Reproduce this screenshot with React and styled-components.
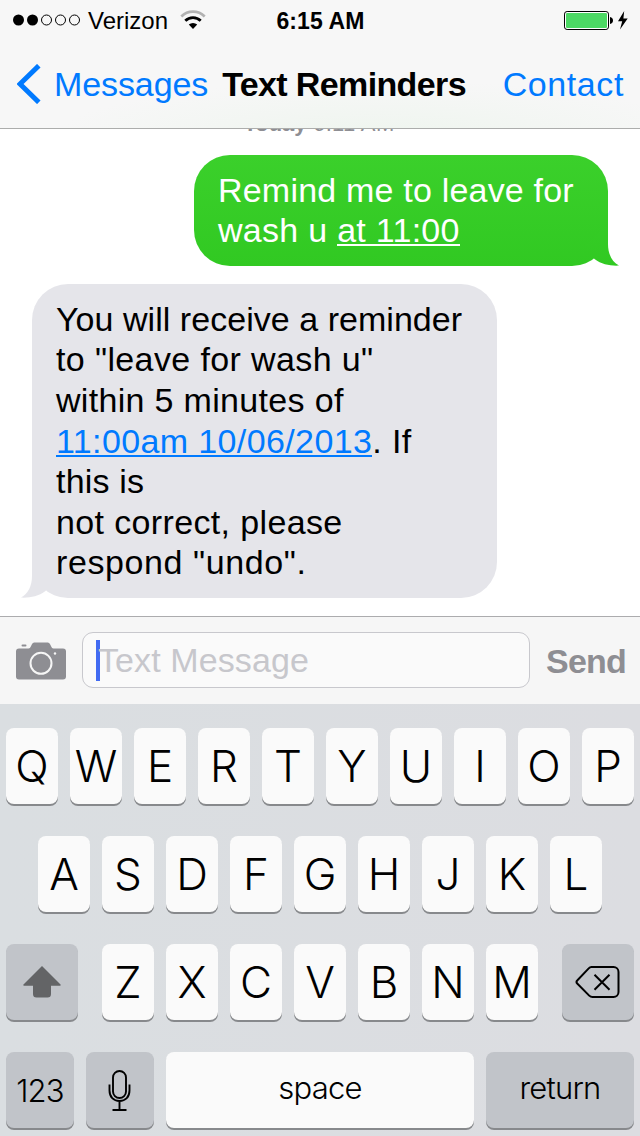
import React from 'react';
import styled, { createGlobalStyle, css } from 'styled-components';

const GlobalStyle = createGlobalStyle`
    * {
        box-sizing: border-box;
    }
    body {
        margin: 0;
        background-color: #fff;
        font-family: "Liberation Sans", Arial, sans-serif;
        overflow: hidden;
    }
`

const Phone = styled.div`
    display: flex;
    flex-direction: column;
    width: 640px;
    height: 1136px;
    overflow: hidden;
    background-color: #fff;
`

const Header = styled.header`
    flex: none;
    height: 129px;
    border-bottom: 1px solid #acadac;
    background: radial-gradient(ellipse 330px 60px at 380px 140px, #eef5ee, #f7f7f7);
`

const StatusBar = styled.div`
    display: grid;
    grid-template-columns: 1fr auto 1fr;
    align-items: center;
    height: 40px;
    padding: 0 12px 0 13px;
    font-size: 24px;
`

const Carrier = styled.div`
    display: flex;
    align-items: center;
    .name {
        margin-left: 7px;
        padding-top: 2px;
    }
    .wifi {
        margin-left: 12px;
    }
`

const Clock = styled.div`
    padding-top: 2px;
    font-weight: bold;
    font-size: 23px;
    letter-spacing: 0.1px;
`

const Power = styled.div`
    display: flex;
    justify-content: flex-end;
`

const NavBar = styled.nav`
    display: flex;
    align-items: center;
    height: 88px;
    padding: 0 16px 0 17px;
    font-size: 34px;
    line-height: 40px;
`

const NavLink = styled.a`
    display: flex;
    align-items: center;
    color: #007aff;
    letter-spacing: ${props => props.$spacing || '0'};
    svg {
        margin-right: 13px;
    }
`

const Title = styled.h1`
    flex: 1;
    margin: 0 0 0 14px;
    font-size: 34px;
    line-height: 40px;
    letter-spacing: -0.63px;
    white-space: nowrap;
`

const Messages = styled.main`
    display: flex;
    flex-direction: column;
    flex: 1;
    overflow: hidden;
`

const Timestamp = styled.div`
    flex: none;
    height: 26px;
    margin-top: -18px;
    margin-bottom: 18px;
    padding-right: 2px;
    text-align: center;
    font-size: 22px;
    line-height: 26px;
    letter-spacing: 0.35px;
    color: #8e8e93;
    b {
        letter-spacing: 0;
    }
`

const Bubble = styled.div`
    position: relative;
    flex: none;
    padding: 14.8px 24px 15px;
    border-radius: 36px;
    font-size: 34px;
    line-height: 40.6px;
    white-space: pre;
    u {
        text-decoration: none;
        background: linear-gradient(currentColor, currentColor) 0 calc(100% - 3px) / 100% 2px no-repeat;
    }
    svg {
        position: absolute;
        bottom: 0;
    }
    ${props => props.$sent ? css`
        align-self: flex-end;
        width: 414px;
        height: 111px;
        margin-right: 32px;
        color: #fff;
        background: linear-gradient(#3bd02b, #31c922);
        svg {
            right: -11px;
        }
    ` : css`
        align-self: flex-start;
        width: 465px;
        height: 314px;
        margin: 18px 0 0 32px;
        color: #000;
        background-color: #e5e5ea;
        svg {
            left: -11px;
            transform: scaleX(-1);
        }
        u {
            color: #007aff;
        }
    `}
`

const Line = styled.div`
    letter-spacing: ${props => props.$spacing || '0.2px'};
`

const Composer = styled.div`
    display: flex;
    align-items: flex-start;
    flex: none;
    height: 88px;
    padding: 15px 14px 0 16px;
    border-top: 1px solid #acacae;
    background-color: #f6f6f6;
    svg {
        flex: none;
        margin-top: 10px;
    }
`

const Field = styled.div`
    display: flex;
    align-items: center;
    flex: none;
    width: 448px;
    height: 56px;
    margin: 0 16px;
    padding-left: 13px;
    border: 1px solid #c8c8cd;
    border-radius: 11px;
    background-color: #fafafa;
    font-size: 34px;
    letter-spacing: 0.1px;
    color: #c7c7cc;
`

const Caret = styled.span`
    width: 4px;
    height: 41px;
    margin-right: -2px;
    background-color: #426bf2;
`

const Send = styled.div`
    font-size: 34px;
    line-height: 58px;
    font-weight: bold;
    letter-spacing: -0.8px;
    color: #8e8e93;
`

const Keyboard = styled.div`
    display: flex;
    flex-direction: column;
    gap: 32px;
    flex: none;
    height: 432px;
    padding: 24px 6px 0;
    background: linear-gradient(90deg, #dadee1, #dcdde1);
`

const KeyRow = styled.div`
    display: flex;
    justify-content: ${props => props.$spread ? 'space-between' : 'center'};
    gap: 12px;
`

const Letters = styled.div`
    display: flex;
    gap: 12px;
`

const Key = styled.div`
    display: flex;
    align-items: center;
    justify-content: center;
    width: ${props => props.$width || 52}px;
    height: 76px;
    padding-bottom: ${props => props.$lift || 0}px;
    border-radius: 8px;
    box-shadow: 0 2px 0 #87898c;
    background-color: ${props => props.$dark ? '#c1c4c9' : '#fafafa'};
    font-family: Inter, "Liberation Sans", sans-serif;
    font-weight: 300;
    font-size: ${props => props.$small ? '31px' : '44px'};
    letter-spacing: ${props => props.$small ? '-0.8px' : '0'};
    color: #000;
`

const Signal = () => (
    <svg width="68" height="12" viewBox="0 0 68 12">
        <circle cx="5.5" cy="6" r="5.5" />
        <circle cx="19.5" cy="6" r="5.5" />
        {[33.5, 47.5, 61.5].map(x => (
            <circle key={x} cx={x} cy="6" r="5" fill="none" stroke="#000" />
        ))}
    </svg>
);

const Wifi = () => (
    <svg className='wifi' width="26" height="20" viewBox="0 0 26 20">
        <path d="M1.3 6.5a16.7 16.7 0 0 1 23.4 0" fill="none" stroke="#b2b2b2" strokeWidth="2.7" />
        <path d="M5.3 10.7a11 11 0 0 1 15.4 0" fill="none" stroke="#000" strokeWidth="2.8" />
        <path d="M8.8 14.6a6 6 0 0 1 8.4 0L13 18.9z" />
    </svg>
);

const Battery = () => (
    <svg width="64" height="20" viewBox="0 0 64 20">
        <rect x="0.5" y="1.5" width="44" height="18" rx="2.6" fill="#fff" stroke="#000" />
        <rect x="2" y="3" width="41" height="15" rx="1.2" fill="#4cd964" />
        <path d="M46 7c2 .4 3 1.7 3 3.5S48 13.6 46 14z" />
        <path d="M60.2 1L54 11.3h4.2L56 19.5 63.7 8.5h-4.3z" />
    </svg>
);

const BackArrow = () => (
    <svg width="24" height="40" viewBox="0 0 24 40">
        <path d="M21.8 1.7L3 20l18.8 18.3" fill="none" stroke="#007aff" strokeWidth="5" />
    </svg>
);

const Tail = ({ id, from, to }) => (
    <svg width="35" height="42" viewBox="0 0 35 42">
        <linearGradient id={id} gradientUnits="userSpaceOnUse" x1="0" y1="0" x2="0" y2="42">
            <stop offset="0" stopColor={from} />
            <stop offset="1" stopColor={to} />
        </linearGradient>
        <path d="M24 0v20c0 10 4 18 11 21.6C26 42 18 40.5 10.5 35L0 22z" fill={`url(#${id})`} />
    </svg>
);

const Camera = () => (
    <svg width="50" height="38" viewBox="0 0 50 38">
        <path d="M3 6.5h9.5c1.3 0 1.7-.7 2.3-2l1-2C16.5 1 17.5.5 19 .5h12c1.5 0 2.5.5 3.2 2l1 2c.6 1.3 1 2 2.3 2H47a3 3 0 0 1 3 3V34.5a3 3 0 0 1-3 3H3a3 3 0 0 1-3-3V9.5a3 3 0 0 1 3-3z" fill="#8e8e93" />
        <rect x="5.5" y="2.5" width="5" height="2" rx="1" fill="#8e8e93" />
        <circle cx="25" cy="21.3" r="10.5" fill="none" stroke="#f6f6f6" strokeWidth="2" />
        <circle cx="39" cy="11.5" r="1.2" fill="#f6f6f6" />
    </svg>
);

const Shift = () => (
    <svg width="38" height="32" viewBox="0 0 38 32">
        <path d="M19 0L37.5 18.5c.6.7.2 1.2-.6 1.2H28V28a3.5 3.5 0 0 1-3.5 3.5h-11A3.5 3.5 0 0 1 10 28v-8.3H1.1c-.8 0-1.2-.5-.6-1.2z" fill="#636466" />
    </svg>
);

const Backspace = () => (
    <svg width="46" height="34" viewBox="0 0 46 34" fill="none" stroke="#000" strokeWidth="2">
        <path d="M16.5 2H38.5a5 5 0 0 1 5 5V27a5 5 0 0 1-5 5H17.5c-1.3 0-2.3-.4-3.3-1.4L2.2 18.5c-1-1-1-2 0-3L13.7 3.4C14.5 2.5 15.3 2 16.5 2z" />
        <path d="M19.5 9.8l15 15M34.5 9.8l-15 15" />
    </svg>
);

const Mic = () => (
    <svg width="24" height="42" viewBox="0 0 24 42" fill="none" stroke="#000" strokeWidth="1.9">
        <rect x="5" y="2" width="13" height="27" rx="6.5" />
        <path d="M1.5 15.5v6c0 6.5 4 10.5 10 10.5S21.5 28 21.5 21.5v-6M11.5 32v8M4.5 41h14" />
    </svg>
);

const App = () => {
    return (
        <Phone>
            <GlobalStyle />
            <Header>
                <StatusBar>
                    <Carrier>
                        <Signal />
                        <span className='name'>Verizon</span>
                        <Wifi />
                    </Carrier>
                    <Clock>6:15 AM</Clock>
                    <Power><Battery /></Power>
                </StatusBar>
                <NavBar>
                    <NavLink $spacing='-0.1px'><BackArrow />Messages</NavLink>
                    <Title>Text Reminders</Title>
                    <NavLink $spacing='0.6px'>Contact</NavLink>
                </NavBar>
            </Header>
            <Messages>
                <Timestamp><b>Today</b> 6:11 AM</Timestamp>
                <Bubble $sent>
                    <Tail id='sentTail' from='#35cc26' to='#31c922' />
                    <Line>Remind me to leave for</Line>
                    <Line $spacing='0.28px'>wash u <u>at 11:00</u></Line>
                </Bubble>
                <Bubble>
                    <Tail id='receivedTail' from='#e5e5ea' to='#e5e5ea' />
                    <Line $spacing='0.04px'>You will receive a reminder</Line>
                    <Line $spacing='0.38px'>to "leave for wash u"</Line>
                    <Line $spacing='0.32px'>within 5 minutes of</Line>
                    <Line $spacing='0.38px'><u>11:00am 10/06/2013</u>. If</Line>
                    <Line>this is</Line>
                    <Line $spacing='0.36px'>not correct, please</Line>
                    <Line $spacing='0.6px'>respond "undo".</Line>
                </Bubble>
            </Messages>
            <Composer>
                <Camera />
                <Field><Caret />Text Message</Field>
                <Send>Send</Send>
            </Composer>
            <Keyboard>
                <KeyRow>
                    {[...'QWERTYUIOP'].map(letter => <Key key={letter}>{letter}</Key>)}
                </KeyRow>
                <KeyRow>
                    {[...'ASDFGHJKL'].map(letter => <Key key={letter}>{letter}</Key>)}
                </KeyRow>
                <KeyRow $spread>
                    <Key $dark $width={72}><Shift /></Key>
                    <Letters>
                        {[...'ZXCVBNM'].map(letter => <Key key={letter}>{letter}</Key>)}
                    </Letters>
                    <Key $dark $width={72}><Backspace /></Key>
                </KeyRow>
                <KeyRow>
                    <Key $dark $small $width={68}>123</Key>
                    <Key $dark $width={68}><Mic /></Key>
                    <Key $small $width={308} $lift={5}>space</Key>
                    <Key $dark $small $width={148} $lift={5}>return</Key>
                </KeyRow>
            </Keyboard>
        </Phone>
    );
};

export default App;
